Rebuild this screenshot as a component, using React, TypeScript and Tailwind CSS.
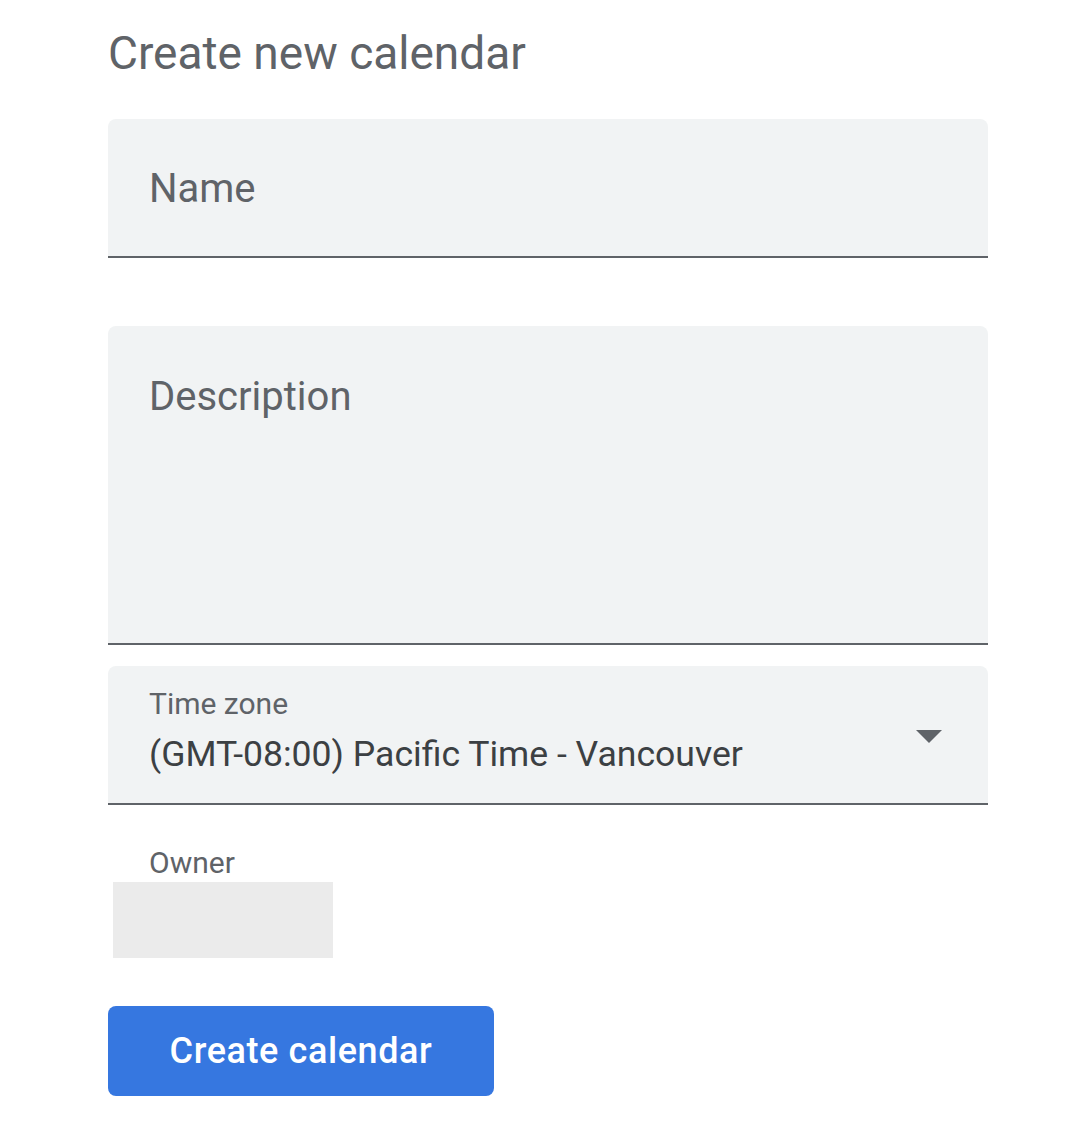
import { useState } from "react";

const fieldBase = "w-full bg-[#f1f3f4] rounded-t-[8px] border-b-2 border-[#5f6368]";

const CreateCalendarForm = () => {
  const [name] = useState("");

  return (
    <div className="min-h-[1136px] bg-white font-['Roboto',sans-serif] text-[#5f6368]">
      <div className="ml-[108px] w-[880px] pt-[25px]">
        <h1 className="text-[46px] leading-[56px] font-normal text-[#5f6368]">Create new calendar</h1>

        {/* Name */}
        <div className={`${fieldBase} h-[139px] mt-[38px] px-[41px] pt-[47px]`}>
          <span className="block text-[40px] leading-[46px]">{name || "Name"}</span>
        </div>

        {/* Description */}
        <div className={`${fieldBase} h-[319px] mt-[68px] px-[41px] pt-[48px]`}>
          <span className="block text-[40px] leading-[46px]">Description</span>
        </div>

        {/* Time zone */}
        <div className={`${fieldBase} h-[139px] mt-[21px] pl-[41px] pr-[46px] flex items-start justify-between`}>
          <div className="pt-[20px]">
            <div className="text-[30px] leading-[35px]">Time zone</div>
            <div className="text-[35.6px] leading-[42px] text-[#3c4043] mt-[12px]">
              (GMT-08:00) Pacific Time - Vancouver
            </div>
          </div>
          <svg width="26" height="13" viewBox="0 0 26 13" className="mt-[64px]">
            <path d="M0 0 L26 0 L13 13 Z" fill="#5f6368" />
          </svg>
        </div>

        {/* Owner */}
        <div className="mt-[41px] pl-[41px] text-[30px] leading-[34px]">Owner</div>
        <div className="ml-[5px] mt-[2px] w-[220px] h-[76px] bg-[#ebebeb]" />

        <button className="mt-[48px] w-[386px] h-[90px] rounded-[8px] bg-[#3677e0] text-white text-[36px] leading-[42px] font-medium tracking-[0.6px]">
          Create calendar
        </button>
      </div>
    </div>
  );
};

export default function App() {
  return <CreateCalendarForm />;
}
